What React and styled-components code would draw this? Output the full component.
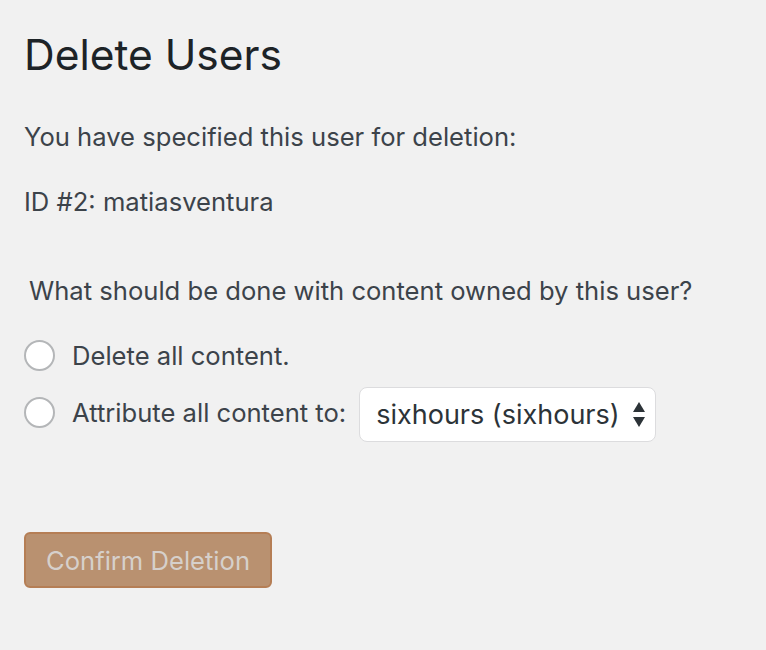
import React from 'react';
import styled, { createGlobalStyle } from 'styled-components';

const Global = createGlobalStyle`
  html, body {
    margin: 0;
    padding: 0;
    background: #f1f1f1;
  }
  body {
    font-family: Inter, "Noto Sans", "Liberation Sans", sans-serif;
    color: #3c434a;
  }
`;

const Page = styled.div`
  padding: 25px 24px 40px;
`;

const Title = styled.h1`
  margin: 0 0 32px;
  font-size: 42.5px;
  line-height: 60px;
  font-weight: 400;
  color: #1d2327;
`;

const Text = styled.p`
  margin: 0 0 26px;
  font-size: 25.6px;
  line-height: 39px;
`;

const Fieldset = styled.fieldset`
  border: 0;
  margin: 50px 0 0;
  padding: 0;
`;

const Legend = styled.legend`
  padding: 0 0 0 5px;
  font-size: 25.6px;
  line-height: 39px;
  margin-bottom: 26px;
`;

const Options = styled.div`
  display: flex;
  flex-direction: column;
  gap: 10px;
`;

const Option = styled.label`
  display: flex;
  align-items: center;
  gap: 17px;
  font-size: 25.6px;
  line-height: 39px;
  min-height: 39px;
`;

const Radio = styled.span`
  width: 27px;
  height: 27px;
  border-radius: 50%;
  border: 2px solid #b4b6b8;
  background: #fff;
  flex: none;
`;

const Select = styled.div`
  display: flex;
  align-items: center;
  gap: 13px;
  box-sizing: border-box;
  height: 55px;
  margin: 2px 0 -2px -4px;
  padding: 0 10px 0 16px;
  background: #fff;
  border: 1px solid #dcdcde;
  border-radius: 8px;
  font-size: 27px;
  color: #2c3338;
`;

const Footer = styled.div`
  margin-top: 92px;
`;

const Button = styled.button`
  font-family: inherit;
  font-size: 25.6px;
  height: 56px;
  padding: 0 20px;
  background: #b99170;
  border: 2px solid #b57e55;
  border-radius: 6px;
  color: #d6d0cb;
`;

const Arrows = () => (
  <svg width="12" height="26" viewBox="0 0 12 26">
    <path d="M6 0 L12 10 L0 10 Z" fill="#2c3338" />
    <path d="M0 15 L12 15 L6 25 Z" fill="#2c3338" />
  </svg>
);

export default function App() {
  return (
    <>
      <Global />
      <Page>
        <Title>Delete Users</Title>
        <Text>You have specified this user for deletion:</Text>
        <Text>ID #2: matiasventura</Text>
        <Fieldset>
          <Legend>What should be done with content owned by this user?</Legend>
          <Options>
            <Option>
              <Radio />
              Delete all content.
            </Option>
            <Option>
              <Radio />
              Attribute all content to:
              <Select>
                sixhours (sixhours)
                <Arrows />
              </Select>
            </Option>
          </Options>
        </Fieldset>
        <Footer>
          <Button>Confirm Deletion</Button>
        </Footer>
      </Page>
    </>
  );
}
